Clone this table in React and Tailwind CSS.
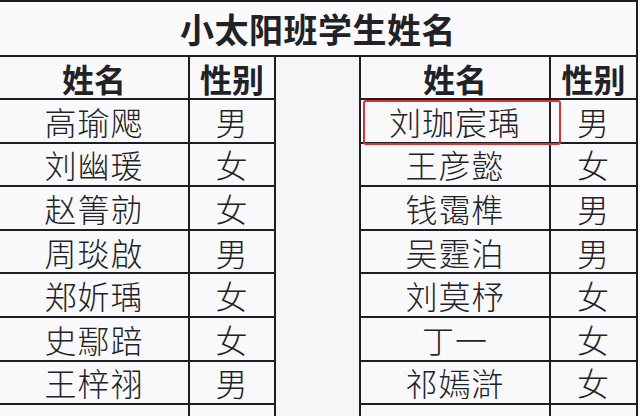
import React from 'react';

const left = [
  ['高瑜飔', '男'],
  ['刘幽瑗', '女'],
  ['赵箐勍', '女'],
  ['周琰啟', '男'],
  ['郑妡瑀', '女'],
  ['史鄢踣', '女'],
  ['王梓祤', '男'],
  ['', ''],
];

const right = [
  ['刘珈宸瑀', '男'],
  ['王彦懿', '女'],
  ['钱霭榫', '男'],
  ['吴霆泊', '男'],
  ['刘莫杼', '女'],
  ['丁一', '女'],
  ['祁嫣滸', '女'],
  ['', ''],
];

const Half = ({ rows, genderW }) => (
  <div className='flex flex-col'>
    <div className='flex h-[43px] border-b-2 border-[#1d1d22] font-bold text-[32px] leading-none'>
      <div className='w-[190px] border-r-2 border-[#1d1d22] flex items-center justify-center'>姓名</div>
      <div className={`${genderW} flex items-center justify-center`}>性别</div>
    </div>
    {rows.map(([name, sex], i) => (
      <div key={i} className='flex h-[43.6px] border-b-2 border-[#1d1d22] text-[32px] leading-none tracking-[1px] font-light'>
        <div className='w-[190px] border-r-2 border-[#1d1d22] flex items-center justify-center'>{name}</div>
        <div className={`${genderW} flex items-center justify-center`}>{sex}</div>
      </div>
    ))}
  </div>
);

const App = () => {
  return (
    <div className='relative w-[640px] h-[416px] overflow-hidden bg-[#f9f9fb] text-[#222226]' style={{ fontFamily: '"Noto Sans CJK SC", "Noto Sans", sans-serif' }}>
      <div className='w-[638px] border-r-2 border-[#1d1d22]'>
        <div className='h-[57px] border-t-2 border-b-2 border-[#1d1d22] flex items-center justify-center font-bold text-[34px] leading-none tracking-[0.5px] bg-[#fafafc]'>
          小太阳班学生姓名
        </div>
        <div className='flex'>
          <div className='w-[274px]'>
            <Half rows={left} genderW='w-[84px]' />
          </div>
          <div className='w-[87px] border-l-2 border-r-2 border-[#1d1d22] bg-[#f6f6f8]'></div>
          <div className='w-[275px]'>
            <Half rows={right} genderW='w-[85px]' />
          </div>
        </div>
      </div>
      {/* red highlight box */}
      <div className='absolute left-[363px] top-[100px] w-[198px] h-[45px] border-2 border-[#d8342f] rounded-[3px]'></div>
    </div>
  );
};

export default App;
